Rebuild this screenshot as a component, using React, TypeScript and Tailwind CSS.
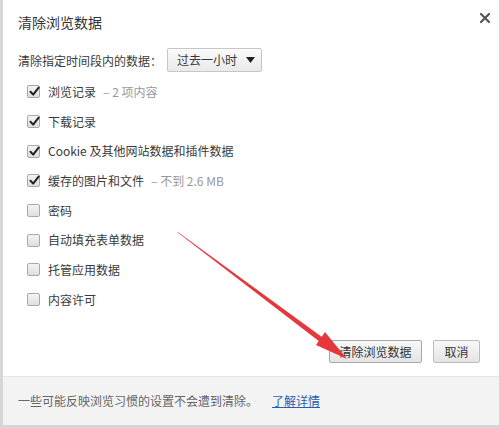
const font = "font-['Microsoft_YaHei','Noto_Sans_CJK_SC',sans-serif]";

type Item = { label: string; note?: string; checked: boolean };

const items: Item[] = [
  { label: "浏览记录", note: "– 2 项内容", checked: true },
  { label: "下载记录", checked: true },
  { label: "Cookie 及其他网站数据和插件数据", checked: true },
  { label: "缓存的图片和文件", note: "– 不到 2.6 MB", checked: true },
  { label: "密码", checked: false },
  { label: "自动填充表单数据", checked: false },
  { label: "托管应用数据", checked: false },
  { label: "内容许可", checked: false },
];

function Checkbox({ checked }: { checked: boolean }) {
  return (
    <span className="relative flex h-[13px] w-[13px] shrink-0 items-center justify-center rounded-[2px] border border-[#a9a9a9] bg-gradient-to-b from-[#f4f4f4] to-[#dedede]">
      {checked && (
        <svg width="11" height="11" viewBox="0 0 11 11" className="absolute left-[1px] top-[0px]">
          <path d="M1.5 5.8 L4.2 8.6 L9.6 1.6" fill="none" stroke="#222" strokeWidth="2" strokeLinecap="round" strokeLinejoin="round" />
        </svg>
      )}
    </span>
  );
}

export default function App() {
  return (
    <div className={`${font} relative flex h-[428px] w-[500px] flex-col border-b-[3px] border-l-[3px] border-r border-[#d6d6d6] bg-white text-[12px] text-[#3a3a3a]`}>
      <div className="flex items-start justify-between pl-[15px] pr-[8px] pt-[12px]">
        <h1 className="text-[14px] leading-[20px] text-[#333]">清除浏览数据</h1>
        <svg width="12" height="12" viewBox="0 0 12 12">
          <path d="M2 2 L10 10 M10 2 L2 10" stroke="#555" strokeWidth="2.2" strokeLinecap="round" />
        </svg>
      </div>

      <div className="mt-[16px] flex items-center pl-[15px]">
        <span className="leading-[23px]">清除指定时间段内的数据：</span>
        <div className="ml-[5px] flex h-[24px] w-[95px] items-center justify-between rounded-[2px] border border-[#c6c6c6] bg-gradient-to-b from-[#fbfbfb] to-[#e9e9e9] pl-[9px] pr-[6px]">
          <span>过去一小时</span>
          <svg width="9" height="6" viewBox="0 0 9 6">
            <path d="M0 0 H9 L4.5 6 Z" fill="#222" />
          </svg>
        </div>
      </div>

      <div className="mt-[5px] flex flex-col pl-[24px]">
        {items.map((it) => (
          <div key={it.label} className="flex h-[29.7px] items-center gap-[8px]">
            <Checkbox checked={it.checked} />
            <span className="leading-[16px]">
              {it.label}
              {it.note && <span className="ml-[7px] text-[#999]">{it.note}</span>}
            </span>
          </div>
        ))}
      </div>

      <div className="mt-auto flex justify-end gap-[11px] pb-[13px] pr-[19px]">
        <button className="h-[23px] w-[93px] rounded-[2px] border border-[#a8a8a8] bg-gradient-to-b from-[#f8f8f8] to-[#e4e4e4] text-[12px] text-[#333]">
          清除浏览数据
        </button>
        <button className="h-[23px] w-[47px] rounded-[2px] border border-[#bcbcbc] bg-gradient-to-b from-[#f8f8f8] to-[#e4e4e4] text-[12px] text-[#333]">
          取消
        </button>
      </div>

      <div className="flex h-[49px] items-center border-t border-[#e6e6e6] bg-[#f3f3f3] pl-[15px]">
        <span className="text-[#666]">一些可能反映浏览习惯的设置不会遭到清除。</span>
        <a className="ml-[14px] text-[#2a5db0] underline">了解详情</a>
      </div>

      <svg className="pointer-events-none absolute left-0 top-0" width="500" height="428" viewBox="0 0 500 428">
        <path d="M174 232 L175.5 232.6 L326.5 342.5 L323.5 347 Z" fill="#e4383d" />
        <path d="M322 332 L344 359 L313 345 Z" fill="#e4383d" />
      </svg>
    </div>
  );
}
